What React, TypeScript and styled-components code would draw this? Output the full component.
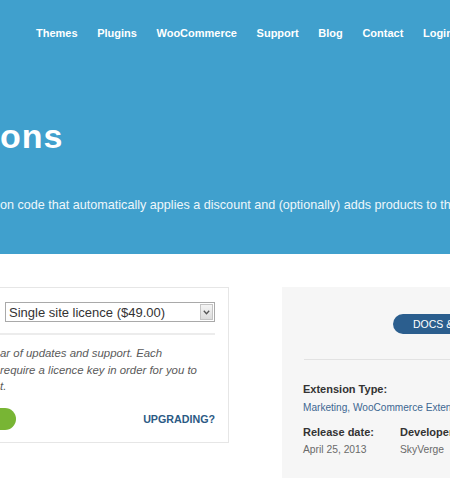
import styled, { createGlobalStyle } from 'styled-components'

const GlobalStyle = createGlobalStyle`
  html, body {
    margin: 0;
    padding: 0;
    background: #ffffff;
    overflow: hidden;
  }
  body {
    width: 450px;
    font-family: "Liberation Sans", Arial, sans-serif;
  }
`

const NAV_ITEMS = ['Themes', 'Plugins', 'WooCommerce', 'Support', 'Blog', 'Contact', 'Login']

const Page = styled.div`
  width: 450px;
  overflow: hidden;
`

const Hero = styled.header`
  background: #40a0cd;
  height: 254px;
  overflow: hidden;
  color: #ffffff;
`

const Nav = styled.nav`
  display: flex;
  align-items: center;
  gap: 19.6px;
  height: 66px;
  padding-left: 36px;
  white-space: nowrap;
`

const NavLink = styled.span`
  font-size: 11px;
  font-weight: 700;
  color: #ffffff;
`

const Title = styled.h1`
  margin: 50px 0 0;
  font-size: 34px;
  line-height: 40px;
  font-weight: 700;
  letter-spacing: 1px;
  white-space: nowrap;
`

const Lead = styled.p`
  margin: 40px 0 0;
  font-size: 12.6px;
  line-height: 18px;
  color: #eef7fb;
  white-space: nowrap;
`

const Content = styled.section`
  display: flex;
  align-items: flex-start;
  padding-top: 33px;
`

const PurchaseCard = styled.div`
  box-sizing: border-box;
  flex-shrink: 0;
  width: 249px;
  margin-left: -20px;
  padding: 14px 13px 12px 24px;
  border: 1px solid #e6e6e6;
  background: #ffffff;
`

const SelectBox = styled.div`
  display: flex;
  align-items: center;
  justify-content: space-between;
  box-sizing: border-box;
  height: 20px;
  padding: 0 1px 0 3px;
  border: 1px solid #a9a9a9;
  font-size: 13px;
  color: #333333;
`

const SelectArrow = styled.span`
  display: flex;
  align-items: center;
  justify-content: center;
  box-sizing: border-box;
  width: 13px;
  height: 16px;
  border: 1px solid #c4c4c4;
  background: linear-gradient(#f4f4f4, #dcdcdc);
`

const Rule = styled.div`
  height: 2px;
  background: #ececec;
`

const CardRule = styled(Rule)`
  margin: 11px 0 0 -5px;
`

const Note = styled.p`
  margin: 10px 0 0 -5px;
  font-size: 11.4px;
  line-height: 16.5px;
  font-style: italic;
  color: #5a5a5a;
  white-space: nowrap;
`

const ActionRow = styled.div`
  display: flex;
  align-items: center;
  justify-content: space-between;
  margin-top: 13px;
`

const BuyButton = styled.span`
  display: block;
  width: 61px;
  height: 22px;
  margin-left: -50px;
  border-radius: 11px;
  background: #78b534;
`

const UpgradeLink = styled.span`
  font-size: 10.7px;
  font-weight: 700;
  color: #2b5a84;
`

const InfoPanel = styled.aside`
  box-sizing: border-box;
  width: 230px;
  flex-shrink: 0;
  margin-left: 53px;
  padding: 27px 0 21px 21px;
  background: #f6f6f6;
`

const DocsPill = styled.span`
  display: inline-flex;
  align-items: center;
  height: 20px;
  margin-left: 90px;
  padding: 0 30px 0 20px;
  border-radius: 10px;
  background: #2b5e8e;
  color: #ffffff;
  font-size: 10.5px;
  white-space: nowrap;
`

const PanelRule = styled(Rule)`
  height: 1px;
  margin: 25px 0 0 1px;
  background: #e2e2e2;
`

const MetaBlock = styled.div<{ $top: number }>`
  margin-top: ${p => p.$top}px;
`

const MetaRow = styled.div`
  display: grid;
  grid-template-columns: 97px 1fr;
`

const MetaLabel = styled.div`
  font-size: 11px;
  line-height: 15px;
  font-weight: 700;
  color: #333333;
  white-space: nowrap;
`

const MetaValue = styled.div<{ $link?: boolean }>`
  margin-top: ${p => (p.$link ? '3px' : '2px')};
  font-size: ${p => (p.$link ? '10.1px' : '10.3px')};
  line-height: 15px;
  color: ${p => (p.$link ? '#3d6792' : '#6a6a6a')};
  white-space: nowrap;
`

export default function App() {
  return (
    <Page>
      <GlobalStyle />
      <Hero>
        <Nav>
          {NAV_ITEMS.map(item => (
            <NavLink key={item}>{item}</NavLink>
          ))}
        </Nav>
        <Title>ons</Title>
        <Lead>on code that automatically applies a discount and (optionally) adds products to the cart</Lead>
      </Hero>

      <Content>
        <PurchaseCard>
          <SelectBox>
            <span>Single site licence ($49.00)</span>
            <SelectArrow>
              <svg width="7" height="5" viewBox="0 0 7 5">
                <path d="M0.8 0.8 L3.5 3.8 L6.2 0.8" fill="none" stroke="#555" strokeWidth="1.3" />
              </svg>
            </SelectArrow>
          </SelectBox>
          <CardRule />
          <Note>
            ar of updates and support. Each
            <br />
            require a licence key in order for you to
            <br />
            t.
          </Note>
          <ActionRow>
            <BuyButton />
            <UpgradeLink>UPGRADING?</UpgradeLink>
          </ActionRow>
        </PurchaseCard>

        <InfoPanel>
          <DocsPill>DOCS &amp; SUPPORT</DocsPill>
          <PanelRule />
          <MetaBlock $top={22}>
            <MetaLabel>Extension Type:</MetaLabel>
            <MetaValue $link>Marketing, WooCommerce Extensions</MetaValue>
          </MetaBlock>
          <MetaBlock $top={10}>
            <MetaRow>
              <MetaLabel>Release date:</MetaLabel>
              <MetaLabel>Developer:</MetaLabel>
            </MetaRow>
            <MetaRow>
              <MetaValue>April 25, 2013</MetaValue>
              <MetaValue>SkyVerge</MetaValue>
            </MetaRow>
          </MetaBlock>
        </InfoPanel>
      </Content>
    </Page>
  )
}
